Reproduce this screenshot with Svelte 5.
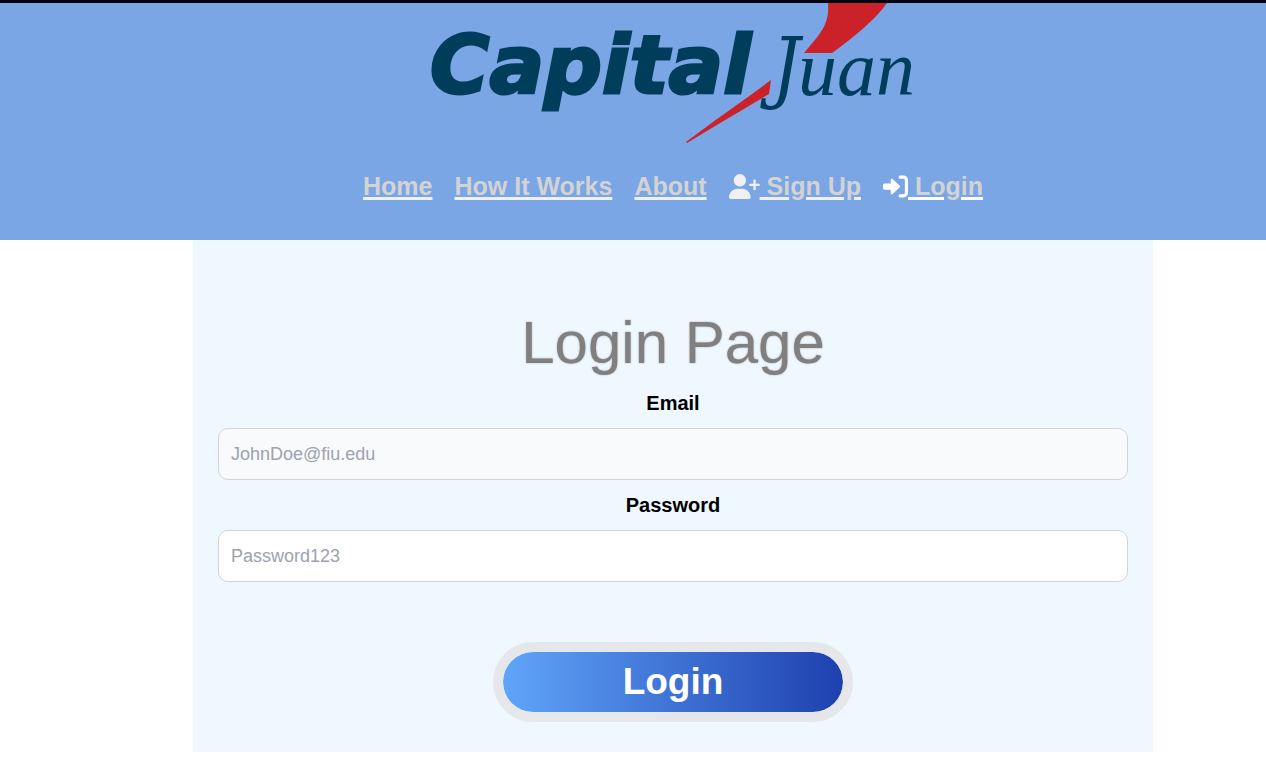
<script lang="ts">
    interface NavLink {
        label: string;
        href: string;
        icon?: 'signup' | 'login';
        active?: boolean;
    }

    const links: NavLink[] = [
        { label: 'Home', href: '#home' },
        { label: 'How It Works', href: '#how-it-works' },
        { label: 'About', href: '#about' },
        { label: 'Sign Up', href: '#sign-up', icon: 'signup' },
        { label: 'Login', href: '#login', icon: 'login', active: true }
    ];

    let email = $state('');
    let password = $state('');
</script>

<header class="site-header">
    <svg class="logo" viewBox="0 0 482 144" role="img" aria-label="Capital Juan">
        <text class="capital" x="-2" y="90">Capital</text>
        <text class="letter-j" x="340" y="91">J</text>
        <text class="uan" x="366" y="92">uan</text>
        <path class="swoosh" d="M396 0H455C443 17 421 35 400 50H372C386 33 398 23 396 0Z" />
        <path class="swoosh" d="M339 77C311 98 280 119 254 139L255 140C281 124 309 108 337 91Z" />
    </svg>

    <nav class="nav">
        {#each links as link}
            <a class="nav-link" class:active={link.active} href={link.href}>
                {#if link.icon === 'signup'}
                    <svg class="icon wide" viewBox="0 0 640 512" aria-hidden="true">
                        <path
                            d="M96 128a128 128 0 1 1 256 0A128 128 0 1 1 96 128zM0 482.300C0 383.800 79.800 304 178.300 304h91.400C368.200 304 448 383.800 448 482.300c0 16.400-13.300 29.700-29.700 29.700H29.700C13.300 512 0 498.700 0 482.300zM504 312V248H440c-13.300 0-24-10.700-24-24s10.700-24 24-24h64V136c0-13.300 10.700-24 24-24s24 10.700 24 24v64h64c13.300 0 24 10.700 24 24s-10.700 24-24 24H552v64c0 13.300-10.700 24-24 24s-24-10.700-24-24z"
                        />
                    </svg>
                {:else if link.icon === 'login'}
                    <svg class="icon" viewBox="0 0 512 512" aria-hidden="true">
                        <path
                            d="M352 96h64c17.700 0 32 14.300 32 32v256c0 17.700-14.300 32-32 32h-64c-17.700 0-32 14.300-32 32s14.300 32 32 32h64c53 0 96-43 96-96V128c0-53-43-96-96-96h-64c-17.700 0-32 14.300-32 32s14.300 32 32 32zM342.600 273.900c4.700-4.500 7.400-10.800 7.400-17.400s-2.700-12.800-7.500-17.300l-144-136c-7-6.600-17.200-8.400-26-4.600S158 111 158 120.500v72H32c-17.700 0-32 14.300-32 32v64c0 17.700 14.300 32 32 32h126v72c0 9.600 5.700 18.200 14.500 22s19 2 26-4.600z"
                        />
                    </svg>
                {/if}<span class="nav-text">{link.icon ? `\u00a0${link.label}` : link.label}</span>
            </a>
        {/each}
    </nav>
</header>

<main class="page">
    <form class="card" onsubmit={(e) => e.preventDefault()}>
        <h1>Login Page</h1>
        <label for="email">Email</label>
        <input id="email" class="email" type="email" placeholder="JohnDoe@fiu.edu" bind:value={email} />
        <label for="password">Password</label>
        <input id="password" type="password" placeholder="Password123" bind:value={password} />
        <button type="submit">Login</button>
    </form>
</main>

<style>
    :global(body) {
        background: #fff;
        font-family: Arial, 'Liberation Sans', sans-serif;
    }
    .site-header {
        display: flex;
        flex-direction: column;
        align-items: center;
        gap: 24px;
        padding: 0 0 38px 80px;
        border-top: 3px solid #000010;
        background: #7aa6e5;
    }
    .logo {
        display: block;
        width: 482px;
        max-width: 100%;
        height: auto;
        overflow: visible;
    }
    .capital {
        font: italic bold 81px 'DejaVu Sans', sans-serif;
        fill: #003d5b;
        stroke: #003d5b;
        stroke-width: 3;
    }
    .letter-j,
    .uan {
        font-style: italic;
        fill: #003d5b;
    }
    .letter-j {
        font-family: 'DejaVu Serif Condensed', 'DejaVu Serif', serif;
        font-size: 78px;
    }
    .uan {
        font-family: 'Liberation Serif', serif;
        font-size: 78px;
    }
    .swoosh {
        fill: #cb2229;
    }
    .nav {
        display: flex;
        flex-wrap: wrap;
        justify-content: center;
        gap: 0 22px;
    }
    .nav-link {
        display: flex;
        align-items: center;
        color: #f0f0f0;
        font-size: 25px;
        font-weight: bold;
        line-height: 31px;
        text-decoration: none;
    }
    .nav-link.active {
        color: #fff;
    }
    .nav-text {
        color: #d3d3d3;
        text-decoration: underline 3px #f0f0f0;
    }
    .active .nav-text {
        text-decoration-color: #fff;
    }
    .icon {
        width: 25px;
        height: 25px;
        fill: currentColor;
    }
    .icon.wide {
        width: 31px;
    }
    .page {
        display: flex;
        justify-content: center;
        padding-left: 80px;
    }
    .card {
        display: flex;
        flex-direction: column;
        box-sizing: border-box;
        width: 100%;
        max-width: 960px;
        padding: 68px 25px 30px;
        background: #eff7ff;
        text-align: center;
    }
    h1 {
        margin: 0;
        color: #808080;
        font-size: 60px;
        font-weight: normal;
        line-height: 70px;
        text-shadow: 0 0 2px #a9a9a9;
    }
    label {
        padding: 10px 0;
        color: #000;
        font-size: 20px;
        font-weight: bold;
        line-height: 30px;
    }
    input {
        box-sizing: border-box;
        width: 100%;
        height: 52px;
        padding: 0 12px;
        border: 1px solid #d1d5db;
        border-radius: 10px;
        background: #fff;
        color: #111827;
        font-family: inherit;
        font-size: 18px;
    }
    .email {
        background: #f9fafb;
    }
    input::placeholder {
        color: #9ca3af;
    }
    button {
        align-self: center;
        width: 360px;
        max-width: 100%;
        height: 80px;
        margin-top: 60px;
        padding: 0;
        border: 10px solid #e5e7eb;
        border-radius: 40px;
        background: linear-gradient(to right, #60a5fa, #1e40af) padding-box;
        color: #fff;
        font-family: inherit;
        font-size: 37px;
        font-weight: bold;
        cursor: pointer;
    }
</style>
